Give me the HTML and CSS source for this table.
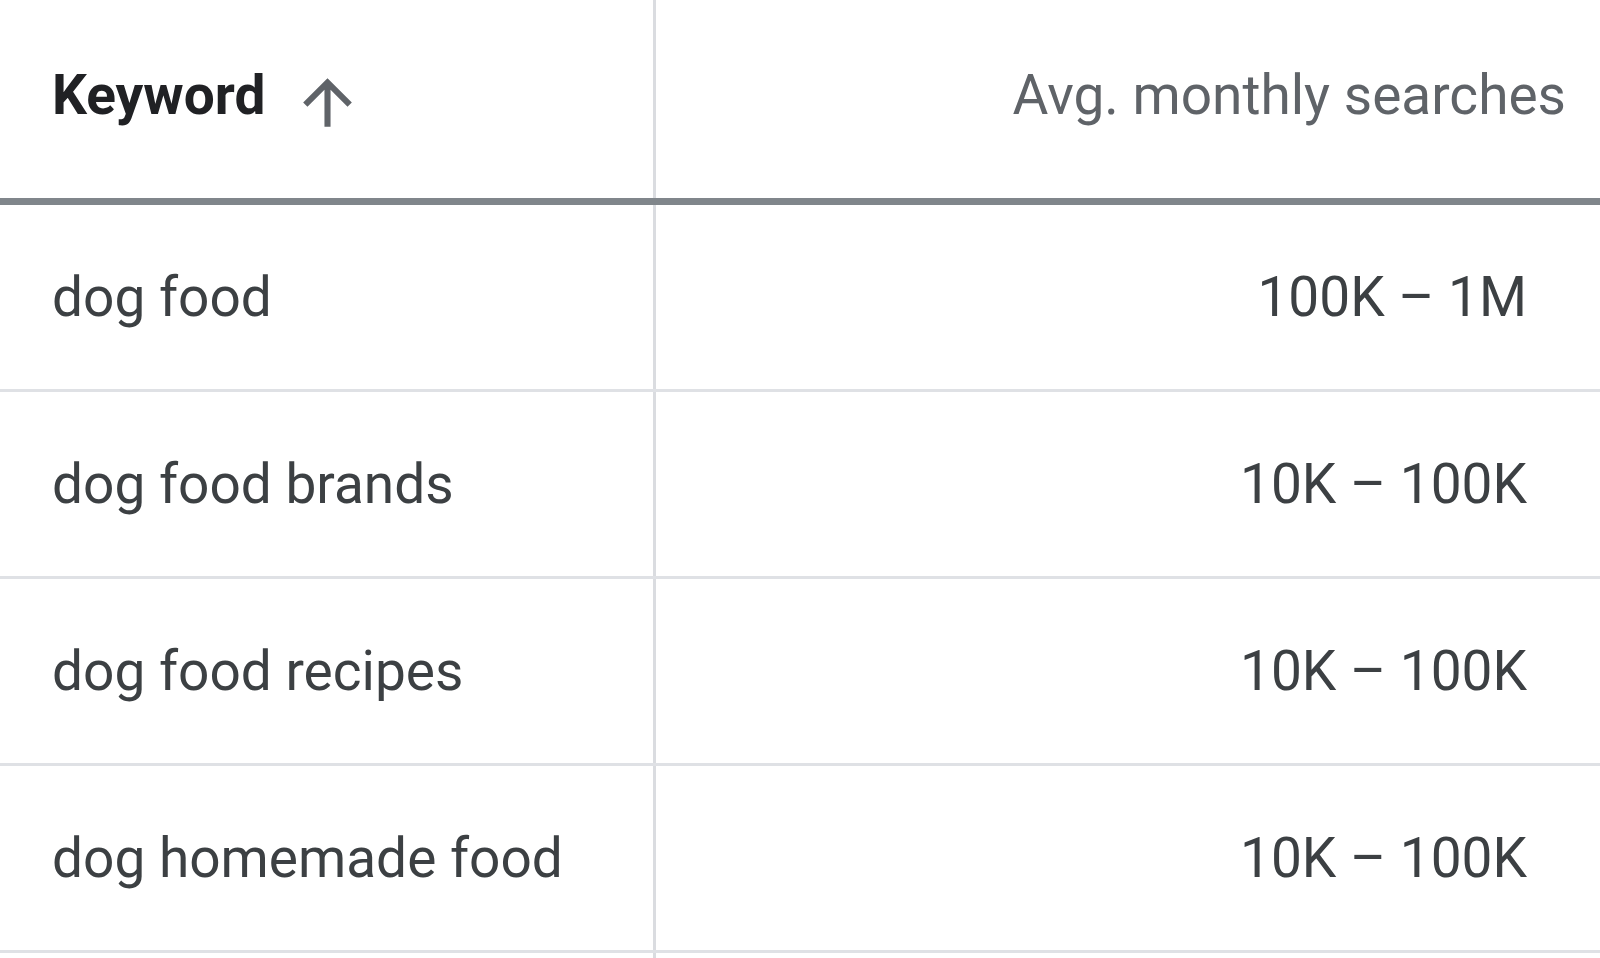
FILE: index.html
```html
<!DOCTYPE html>
<html lang="en">
<head>
<meta charset="utf-8">
<title>Keyword ideas</title>
<link rel="stylesheet" href="styles.css">
</head>
<body>
<div class="table">
  <div class="row head">
    <div class="cell kw"><span class="label">Keyword</span><svg class="sort" viewBox="0 0 24 24" aria-hidden="true"><path d="M4 12l1.41 1.41L11 7.83V20h2V7.83l5.58 5.59L20 12l-8-8-8 8z"/></svg></div>
    <div class="cell num">Avg. monthly searches</div>
  </div>
  <div class="row"><div class="cell kw">dog food</div><div class="cell num">100K – 1M</div></div>
  <div class="row"><div class="cell kw">dog food brands</div><div class="cell num">10K – 100K</div></div>
  <div class="row"><div class="cell kw">dog food recipes</div><div class="cell num">10K – 100K</div></div>
  <div class="row"><div class="cell kw">dog homemade food</div><div class="cell num">10K – 100K</div></div>
  <div class="row filler"><div class="cell kw"></div><div class="cell num"></div></div>
</div>
</body>
</html>
```
FILE: styles.css
```css
html, body {
  margin: 0;
  padding: 0;
  background: #ffffff;
}
body {
  font-family: Roboto, "Noto Sans", "Liberation Sans", sans-serif;
  overflow: hidden;
  height: 958px;
}
.table {
  width: 1600px;
}
.row {
  display: grid;
  grid-template-columns: 656px 1fr;
  height: 184px;
  border-bottom: 3px solid #dfe1e5;
}
.cell {
  box-sizing: border-box;
  font-size: 55px;
  line-height: 67px;
  padding-top: 59px;
  color: #3c4043;
  white-space: nowrap;
}
.kw {
  border-right: 3px solid #dadce0;
  padding-left: 52px;
}
.num {
  text-align: right;
  padding-right: 73px;
}
.head {
  height: 198px;
  border-bottom: 7px solid #80868b;
}
.head .cell {
  padding-top: 62px;
}
.head .kw {
  display: flex;
  align-items: flex-start;
  color: #202124;
  font-weight: 700;
}
.sort {
  width: 73px;
  height: 73px;
  margin-left: 26px;
  margin-top: 4px;
  fill: #5f6368;
  flex: none;
}
.head .num {
  color: #5f6368;
  padding-right: 34px;
}
.filler {
  height: 40px;
  border-bottom: none;
}
```
